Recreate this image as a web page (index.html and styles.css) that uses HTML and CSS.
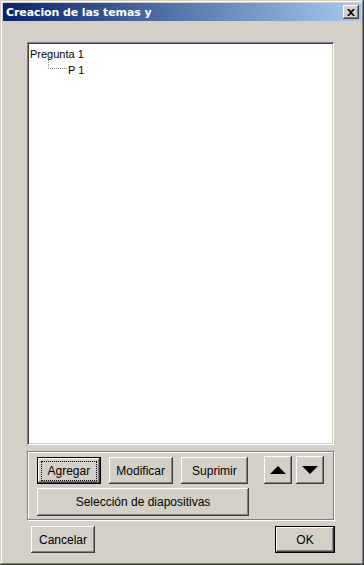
FILE: index.html
```html
<!DOCTYPE html>
<html>
	<head>
		<title>Creacion de las temas y</title>
		<link rel="stylesheet" href="styles.css">
	</head>
	<body>
		<!-- dialog window -->
		<div class="window">
			<div class="titlebar">
				<span class="title">Creacion de las temas y</span>
				<span class="closeBtn">
					<svg width="8" height="7" viewBox="0 0 8 7"><path d="M0 0h2l2 2 2-2h2L5 3.5 8 7H6L4 5 2 7H0l3-3.5z" fill="#000"/></svg>
				</span>
			</div>
			<div class="content">
				<div class="tree">
					<div class="node">Pregunta 1</div>
					<div class="node child"><span class="branch"></span>P 1</div>
				</div>
				<div class="group">
					<div class="row">
						<button class="btn focused w64"><span class="focusRing">Agregar</span></button>
						<button class="btn w64">Modificar</button>
						<button class="btn w68">Suprimir</button>
						<button class="btn arrow up"><span class="tri triUp"></span></button>
						<button class="btn arrow"><span class="tri triDown"></span></button>
					</div>
					<div class="row">
						<button class="btn wide">Selección de diapositivas</button>
					</div>
				</div>
				<div class="footer">
					<button class="btn w64 tall">Cancelar</button>
					<button class="btn default okBtn">OK</button>
				</div>
			</div>
		</div>
	</body>
</html>
```

FILE: styles.css
```css
body
{
	margin:0;
	background:#D4D0C8;
	font:11px "Liberation Sans", Arial, sans-serif;
}

.window
{
	width:364px;
	height:565px;
	box-sizing:border-box;
	padding:3px 3px 0 3px;
	background:#D4D0C8;
	box-shadow:inset -1px -1px #404040, inset 1px 1px #D4D0C8, inset -2px -2px #808080, inset 2px 2px #FFFFFF;
}

.titlebar
{
	height:18px;
	display:flex;
	align-items:center;
	justify-content:space-between;
	background:linear-gradient(90deg, #0A246A, #A6CAF0);
	padding:0 2px 0 3px;
}
.title
{
	color:#FFFFFF;
	font:bold 11px "DejaVu Sans", "Liberation Sans", sans-serif;
	letter-spacing:-0.1px;
}
.closeBtn
{
	width:16px;
	height:14px;
	box-sizing:border-box;
	display:flex;
	align-items:center;
	justify-content:center;
	background:#D4D0C8;
	box-shadow:inset -1px -1px #404040, inset 1px 1px #FFFFFF, inset -2px -2px #808080;
}

.content
{
	padding:21px 27px 0 24px;
}

.tree
{
	height:403px;
	box-sizing:border-box;
	background:#FFFFFF;
	padding:4px 3px;
	box-shadow:inset 1px 1px #808080, inset -1px -1px #FFFFFF, inset 2px 2px #404040, inset -2px -2px #D4D0C8;
	color:#000000;
}
.node
{
	height:16px;
	line-height:16px;
	position:relative;
}
.child
{
	padding-left:38px;
}
.branch
{
	position:absolute;
	left:18px;
	top:-4px;
	width:18px;
	height:10px;
	border-left:1px dotted #808080;
	border-bottom:1px dotted #808080;
}

.group
{
	margin-top:6px;
	height:69px;
	box-sizing:border-box;
	padding:5px 9px 0 9px;
	border:1px solid #808080;
	box-shadow:inset 1px 1px #FFFFFF, 1px 1px #FFFFFF;
}
.row
{
	display:flex;
	gap:8px;
	margin-bottom:4px;
}

.btn
{
	height:27px;
	box-sizing:border-box;
	border:none;
	padding:0;
	background:#D4D0C8;
	font:12px "Liberation Sans", Arial, sans-serif;
	color:#000000;
	box-shadow:inset -1px -1px #404040, inset 1px 1px #FFFFFF, inset -2px -2px #808080;
}
.w64
{
	width:64px;
}
.w68
{
	width:68px;
}
.wide
{
	width:212px;
	height:28px;
}
.arrow
{
	width:28px;
	height:28px;
	margin-top:-1px;
	display:flex;
	align-items:center;
	justify-content:center;
}
.up
{
	margin-left:8px;
}
.arrow + .arrow
{
	margin-left:-4px;
}
.tri
{
	width:0;
	height:0;
	border-left:8px solid transparent;
	border-right:8px solid transparent;
}
.triUp
{
	border-bottom:8px solid #000000;
}
.triDown
{
	border-top:8px solid #000000;
}

.focused,
.default
{
	box-shadow:inset 0 0 0 1px #000000, inset -2px -2px #404040, inset 2px 2px #FFFFFF, inset -3px -3px #808080;
}
.focusRing
{
	display:block;
	margin:0 4px;
	height:20px;
	line-height:18px;
	box-sizing:border-box;
	border:1px dotted #000000;
}

.footer
{
	margin-top:6px;
	padding-left:4px;
	display:flex;
	justify-content:space-between;
}
.okBtn
{
	width:60px;
	margin-right:-1px;
}
```
